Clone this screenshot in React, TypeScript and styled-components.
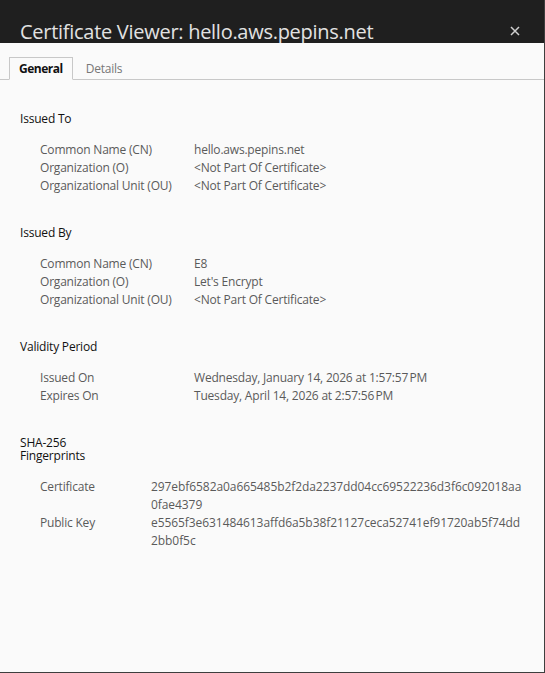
import React from "react";
import styled, { createGlobalStyle } from "styled-components";

const Global = createGlobalStyle`
  html, body { margin: 0; padding: 0; background: #fafafa; }
  #root { width: 545px; height: 673px; }
  * { box-sizing: border-box; }
`;

const FONT = `"Open Sans", "Noto Sans", sans-serif`;

const Window = styled.div`
  width: 545px;
  height: 673px;
  background: #fafafa;
  border-right: 1px solid #3e3e3e;
  border-bottom: 1px solid #3e3e3e;
  font-family: ${FONT};
  display: flex;
  flex-direction: column;
`;

const TitleBar = styled.div`
  height: 43px;
  flex: none;
  background: #1f1f1f;
  overflow: hidden;
  display: flex;
  align-items: flex-start;
  justify-content: space-between;
  padding: 19px 24px 0 20px;
`;

const Title = styled.div`
  font-size: 20px;
  line-height: 26px;
  color: #e2e2e2;
  letter-spacing: -0.28px;
`;

const Close = styled.div`
  width: 10px;
  height: 10px;
  margin-top: 7px;
  display: flex;
`;

const TabBar = styled.div`
  display: flex;
  align-items: flex-end;
  height: 37px;
  padding-left: 9px;
  border-bottom: 1px solid #c8c8c8;
  flex: none;
`;

const Tab = styled.div<{ $active?: boolean }>`
  height: 23px;
  margin-bottom: -1px;
  padding: 0 ${(p) => (p.$active ? "9px" : "12px")};
  font-size: 12px;
  line-height: 21px;
  letter-spacing: ${(p) => (p.$active ? "-0.5px" : "-0.2px")};
  font-weight: ${(p) => (p.$active ? 700 : 400)};
  color: ${(p) => (p.$active ? "#111" : "#777")};
  background: ${(p) => (p.$active ? "#fafafa" : "transparent")};
  border: 1px solid ${(p) => (p.$active ? "#c8c8c8" : "transparent")};
  border-bottom: 1px solid ${(p) => (p.$active ? "#fafafa" : "transparent")};
`;

const Body = styled.div`
  padding: 32px 0 0 20px;
  display: flex;
  flex-direction: column;
  gap: 31px;
`;

const Section = styled.section`
  display: flex;
  flex-direction: column;
  gap: 16px;
`;

const Heading = styled.div`
  font-size: 12px;
  line-height: 13px;
  color: #111;
  width: 100px;
  letter-spacing: -0.2px;
`;

const Rows = styled.div<{ $label: number }>`
  display: grid;
  grid-template-columns: ${(p) => p.$label}px 1fr;
  padding-left: 20px;
  font-size: 12px;
  line-height: 18px;
  color: #5a5a5a;
  letter-spacing: -0.2px;
`;

const Label = styled.div``;
const Value = styled.div<{ $mono?: boolean }>`
  letter-spacing: ${(p) => (p.$mono ? "-0.07px" : "-0.2px")};
`;

type Row = [string, string[]];

const sections: { title: string; label: number; hex?: boolean; rows: Row[] }[] = [
  {
    title: "Issued To",
    label: 154,
    rows: [
      ["Common Name (CN)", ["hello.aws.pepins.net"]],
      ["Organization (O)", ["<Not Part Of Certificate>"]],
      ["Organizational Unit (OU)", ["<Not Part Of Certificate>"]],
    ],
  },
  {
    title: "Issued By",
    label: 154,
    rows: [
      ["Common Name (CN)", ["E8"]],
      ["Organization (O)", ["Let's Encrypt"]],
      ["Organizational Unit (OU)", ["<Not Part Of Certificate>"]],
    ],
  },
  {
    title: "Validity Period",
    label: 154,
    rows: [
      ["Issued On", ["Wednesday, January 14, 2026 at 1:57:57\u202FPM"]],
      ["Expires On", ["Tuesday, April 14, 2026 at 2:57:56\u202FPM"]],
    ],
  },
  {
    title: "SHA-256 Fingerprints",
    label: 111,
    hex: true,
    rows: [
      ["Certificate", ["297ebf6582a0a665485b2f2da2237dd04cc69522236d3f6c092018aa", "0fae4379"]],
      ["Public Key", ["e5565f3e631484613affd6a5b38f21127ceca52741ef91720ab5f74dd", "2bb0f5c"]],
    ],
  },
];

export default function App() {
  return (
    <>
      <Global />
      <Window>
        <TitleBar>
          <Title>Certificate Viewer: hello.aws.pepins.net</Title>
          <Close>
            <svg width="10" height="10" viewBox="0 0 10 10">
              <path d="M1 1L9 9M9 1L1 9" stroke="#cfcfcf" strokeWidth="1.5" />
            </svg>
          </Close>
        </TitleBar>
        <TabBar>
          <Tab $active>General</Tab>
          <Tab>Details</Tab>
        </TabBar>
        <Body>
          {sections.map((s) => (
            <Section key={s.title}>
              <Heading>{s.title}</Heading>
              <Rows $label={s.label}>
                {s.rows.map(([l, v]) => (
                  <React.Fragment key={l}>
                    <Label>{l}</Label>
                    <Value $mono={s.hex}>
                      {v.map((line, i) => (
                        <div key={i}>{line}</div>
                      ))}
                    </Value>
                  </React.Fragment>
                ))}
              </Rows>
            </Section>
          ))}
        </Body>
      </Window>
    </>
  );
}
